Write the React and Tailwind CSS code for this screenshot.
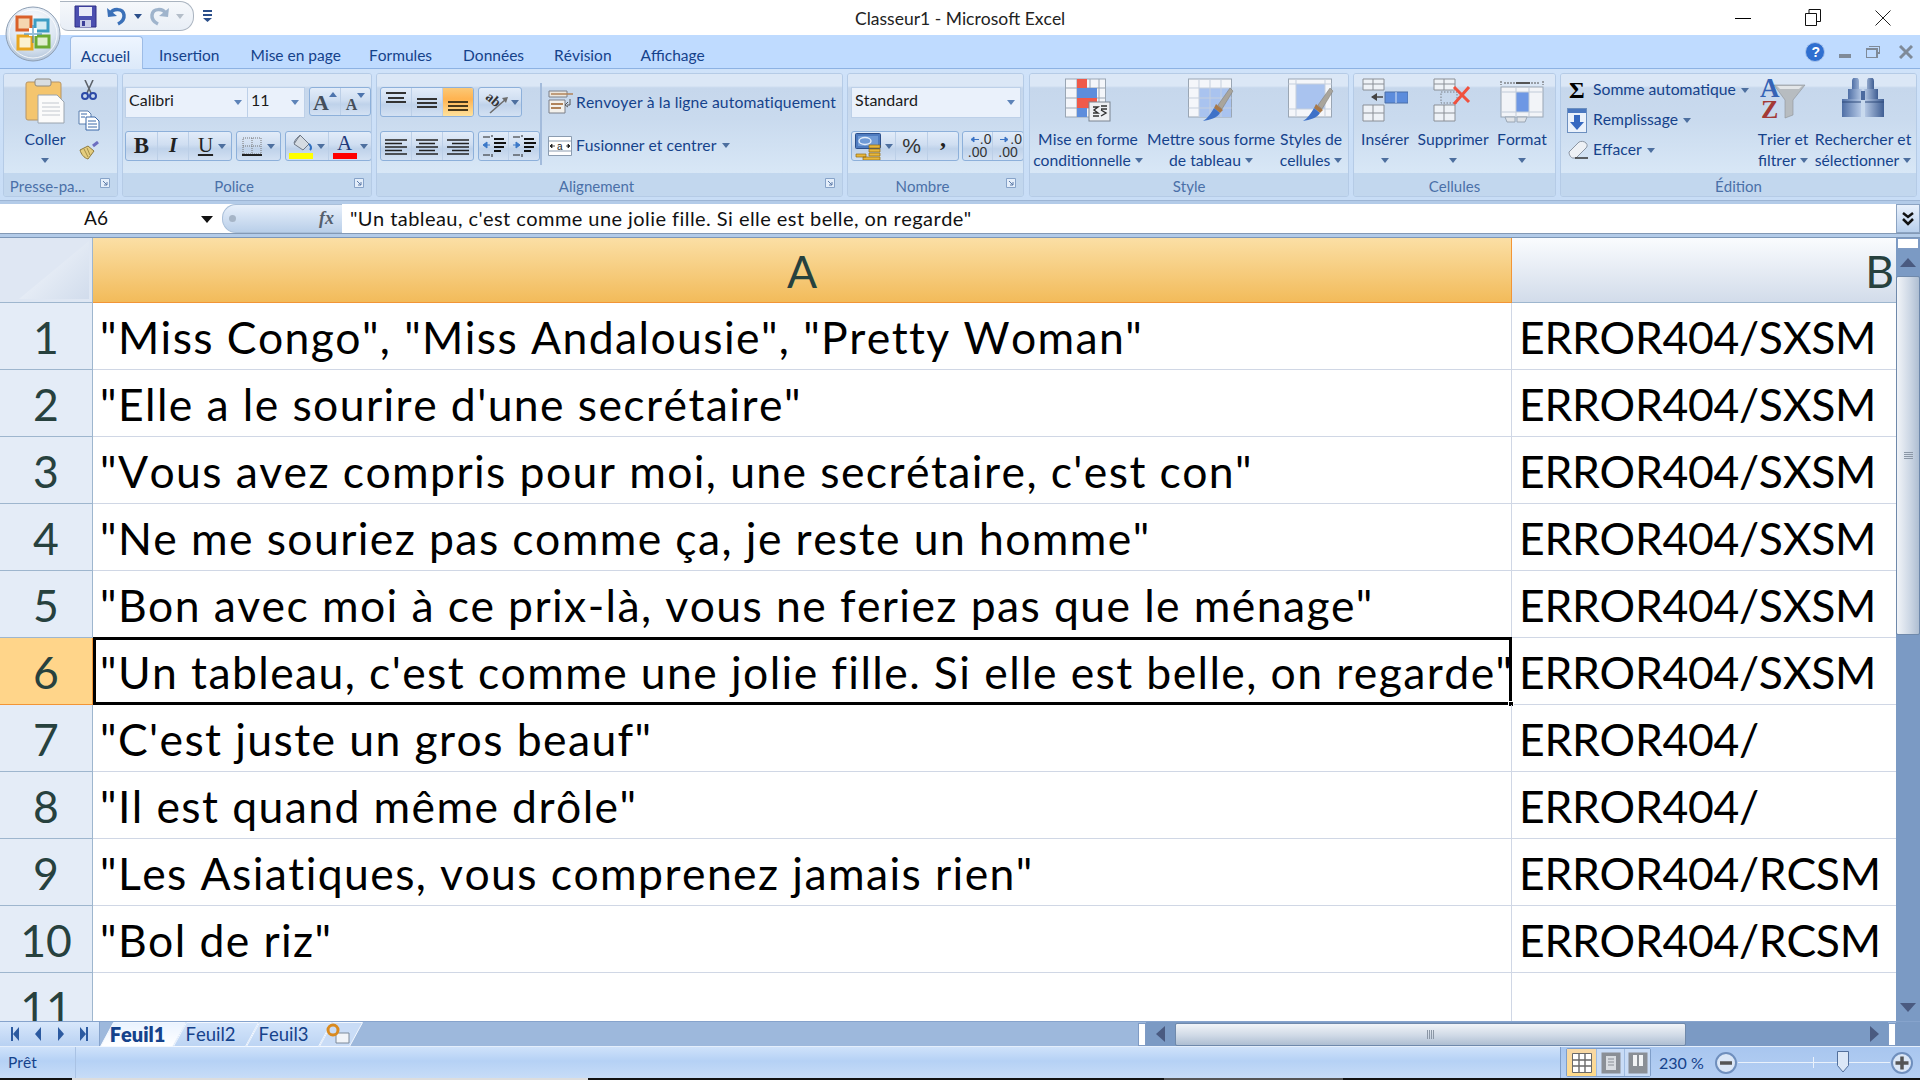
import React from 'react';

const SANS = 'font-["Lato","Noto_Sans",sans-serif] [font-kerning:none]';

const ROWS = [
  ['"Miss Congo", "Miss Andalousie", "Pretty Woman"', 'ERROR404/SXSM'],
  ['"Elle a le sourire d\'une secrétaire"', 'ERROR404/SXSM'],
  ['"Vous avez compris pour moi, une secrétaire, c\'est con"', 'ERROR404/SXSM'],
  ['"Ne me souriez pas comme ça, je reste un homme"', 'ERROR404/SXSM'],
  ['"Bon avec moi à ce prix-là, vous ne feriez pas que le ménage"', 'ERROR404/SXSM'],
  ['"Un tableau, c\'est comme une jolie fille. Si elle est belle, on regarde"', 'ERROR404/SXSM'],
  ['"C\'est juste un gros beauf"', 'ERROR404/'],
  ['"Il est quand même drôle"', 'ERROR404/'],
  ['"Les Asiatiques, vous comprenez jamais rien"', 'ERROR404/RCSM'],
  ['"Bol de riz"', 'ERROR404/RCSM'],
  ['', ''],
];

function Caret({ color = '#4d6f9f', size = 8, className = '' }) {
  return (
    <svg width={size} height={size / 2 + 1} viewBox="0 0 8 5" className={className}>
      <path d="M0 0h8L4 5z" fill={color} />
    </svg>
  );
}

function Launcher() {
  return (
    <svg width="12" height="12" viewBox="0 0 12 12" className="absolute right-[6px] top-[4px]">
      <path d="M1.5 1.5h9v9h-9z" fill="#e4eefa" stroke="#87a3c8" />
      <path d="M4 4l4 4M8 5v3H5" fill="none" stroke="#5c7ba8" />
    </svg>
  );
}

function Group({ width, caption, launcher, children, className = '' }) {
  return (
    <div className={`flex flex-col h-[124px] rounded-[3px] border border-[#b5cbe6] overflow-hidden ${className}`} style={{ width }}>
      <div className="flex-1 min-h-0 flex bg-[linear-gradient(180deg,#dbe7f6_0%,#dbe7f6_12%,#c6d7ec_14%,#c9daee_45%,#d8e7f6_100%)]">
        {children}
      </div>
      <div className={`relative h-[23px] shrink-0 pt-[3px] bg-[#c2d7ee] flex items-center justify-center text-[15px] text-[#4a70a8] ${launcher ? 'pr-[26px]' : ''}`}>
        {caption}
        {launcher && <Launcher />}
      </div>
    </div>
  );
}

function LargeButton({ width, icon, lines, caret, className = '' }) {
  return (
    <div className={`flex flex-col items-center shrink-0 ${className}`} style={{ width }}>
      <div className="h-[55px] pt-[4px] flex justify-center">{icon}</div>
      <div className="h-[21px] flex items-center whitespace-nowrap">{lines[0]}</div>
      <div className="h-[21px] flex items-center gap-[4px] whitespace-nowrap">
        {lines[1]}
        {caret && <Caret />}
      </div>
    </div>
  );
}

function BtnGroup({ children, className = '' }) {
  return (
    <div className={`flex rounded-[3px] border border-[#8db0da] bg-[linear-gradient(180deg,#e2ecf9_0%,#cfdef1_45%,#bfd2ea_60%,#d3e1f3_100%)] overflow-hidden ${className}`}>
      {children}
    </div>
  );
}

function Btn({ width, children, active, last }) {
  return (
    <div
      className={`flex items-center justify-center gap-[3px] h-full ${last ? '' : 'border-r border-[#bccfe7]'} ${active ? 'bg-[linear-gradient(180deg,#fbc876_0%,#ffb350_40%,#ffe29c_100%)]' : ''}`}
      style={{ width }}
    >
      {children}
    </div>
  );
}

function Combo({ width, text, textClass = '' }) {
  return (
    <div className={`h-[31px] flex items-center justify-between pl-[3px] pr-[5px] bg-[#eaf1fb] border border-[#bdd0e8] shrink-0 ${textClass}`} style={{ width }}>
      <span className="text-[16px] text-[#1a1a1a] -mt-[6px]">{text}</span>
      <Caret color="#5d83b8" />
    </div>
  );
}

function OfficeButton() {
  return (
    <svg width="56" height="56" viewBox="0 0 56 56" className="absolute left-[5px] top-[6px] z-10">
      <defs>
        <radialGradient id="orb" cx="50%" cy="30%" r="75%">
          <stop offset="0" stopColor="#fbfdff" />
          <stop offset="0.6" stopColor="#dce6f2" />
          <stop offset="1" stopColor="#a9bdd4" />
        </radialGradient>
      </defs>
      <circle cx="28" cy="28" r="27" fill="url(#orb)" stroke="#8e9fb4" />
      <circle cx="28" cy="28" r="24" fill="none" stroke="#ffffff" strokeOpacity="0.8" />
      <path d="M12 11h14v13H12z" fill="#f5d6b0" stroke="#d9602a" strokeWidth="3" />
      <path d="M30 14h13v11H30z" fill="#d5ecf3" stroke="#3d9dc4" strokeWidth="3" />
      <path d="M13 30h14v13H13z" fill="#fbf1cf" stroke="#e9a51d" strokeWidth="3" />
      <path d="M31 30h13v11H31z" fill="#e0eecf" stroke="#6bab33" strokeWidth="3" />
      <path d="M24 22h8v8h-8z" fill="#ffffff" />
      <path d="M28 19v18M19 28h18" stroke="#2e7fb5" strokeOpacity="0.5" strokeWidth="2" />
    </svg>
  );
}

function SaveIcon() {
  return (
    <svg width="23" height="23" viewBox="0 0 23 23">
      <path d="M1 1h21v21H1z" fill="#4b4fb0" stroke="#2f2f85" />
      <path d="M5 2h13v9H5z" fill="#e8eaf8" />
      <path d="M6 15h11v7H6z" fill="#c9cde8" />
      <path d="M8 16h3v5H8z" fill="#3c3f98" />
    </svg>
  );
}

function UndoIcon({ flip, muted }) {
  const c = muted ? '#9fb4cc' : '#3a70b8';
  return (
    <svg width="20" height="22" viewBox="0 0 20 22" style={flip ? { transform: 'scaleX(-1)' } : undefined}>
      <path d="M3 9c3-6 13-6 14 1 .5 4-2 7-6 9" fill="none" stroke={c} strokeWidth="3.5" />
      <path d="M0 3l1 9 9-1z" fill={c} />
    </svg>
  );
}

function PasteIcon() {
  return (
    <svg width="40" height="46" viewBox="0 0 40 46">
      <rect x="1" y="4" width="35" height="38" rx="2" fill="#f4c56e" stroke="#b59466" />
      <rect x="10" y="1" width="16" height="7" rx="2" fill="#d8dde2" stroke="#8e8a80" />
      <path d="M13 17h19l7 7v21H13z" fill="#fbfbfb" stroke="#9aa4ae" />
      <path d="M17 25h17M17 29h18M17 33h18M17 37h18" stroke="#c3c8cf" />
    </svg>
  );
}

function ScissorsIcon() {
  return (
    <svg width="16" height="21" viewBox="0 0 16 21">
      <path d="M4 0l6 13M12 0L6 13" stroke="#5d636b" strokeWidth="1.6" />
      <circle cx="4" cy="16" r="3" fill="none" stroke="#2c4aa8" strokeWidth="2" />
      <circle cx="12" cy="16" r="3" fill="none" stroke="#2c4aa8" strokeWidth="2" />
    </svg>
  );
}

function CopyIcon() {
  return (
    <svg width="22" height="21" viewBox="0 0 22 21">
      <path d="M1 1h9l3 3v10H1z" fill="#fff" stroke="#5b7fae" />
      <path d="M8 7h9l4 4v9H8z" fill="#fff" stroke="#3b68a8" />
      <path d="M3 4h6M3 7h4M10 11h8M10 14h9M10 17h9" stroke="#3b68a8" />
    </svg>
  );
}

function BrushIcon() {
  return (
    <svg width="20" height="19" viewBox="0 0 20 19">
      <path d="M14 5l5-4" stroke="#6d6ec0" strokeWidth="3" />
      <path d="M1 9l8-4 6 5-6 8C5 17 2 13 1 9z" fill="#e4cd7e" stroke="#8d7a3f" />
      <path d="M5 8l4 8M8 7l3 7" stroke="#a58f49" />
    </svg>
  );
}

function Grow({ small }) {
  return (
    <div className="flex items-start">
      <span className={`font-["Liberation_Serif",serif] font-bold text-[#444e5a] leading-none ${small ? 'text-[16px] mt-[7px]' : 'text-[22px] mt-[3px]'}`}>A</span>
      {small ? (
        <svg width="8" height="5" viewBox="0 0 8 5" className="mt-[3px]"><path d="M0 0h8L4 5z" fill="#4d74ad" /></svg>
      ) : (
        <svg width="8" height="5" viewBox="0 0 8 5" className="mt-[3px]"><path d="M0 5h8L4 0z" fill="#4d74ad" /></svg>
      )}
    </div>
  );
}

function BorderIcon() {
  return (
    <svg width="20" height="19" viewBox="0 0 20 19">
      <path d="M1 1h18v16H1zM10 1v16M1 9h18" fill="none" stroke="#777" strokeDasharray="1 1" />
      <path d="M0 18h20" stroke="#222" strokeWidth="2" />
    </svg>
  );
}

function FillIcon() {
  return (
    <svg width="25" height="26" viewBox="0 0 25 26">
      <path d="M11 2l9 9-6 6-9-6z" fill="#d5dbe2" stroke="#6f7885" />
      <path d="M11 3C8 4 6 7 5 10" fill="none" stroke="#6f7885" />
      <path d="M20 11c2 2 3 4 1 6" fill="none" stroke="#2f6fc0" strokeWidth="2" />
      <path d="M0 20h24v6H0z" fill="#ffff00" />
    </svg>
  );
}

function ColorA() {
  return (
    <div className="flex flex-col items-center w-[25px]">
      <span className='font-["Liberation_Serif",serif] text-[21px] leading-[20px] text-[#1f3a7a]'>A</span>
      <div className="w-[24px] h-[6px] bg-[#ff0000]" />
    </div>
  );
}

function Lines({ rows, color = '#222', w = 24, h = 18 }) {
  return (
    <svg width={w} height={h} viewBox={`0 0 ${w} ${h}`}>
      {rows.map((r, i) => (
        <path key={i} d={`M${r[0]} ${r[2]}H${r[1]}`} stroke={color} strokeWidth={r[3] || 1.4} />
      ))}
    </svg>
  );
}

function OrientIcon() {
  return (
    <svg width="28" height="28" viewBox="0 0 28 28">
      <text x="4" y="15" fontSize="14" fontWeight="700" fontFamily="Liberation Serif" fill="#333" transform="rotate(40 10 11)">ab</text>
      <path d="M8 25L24 11" stroke="#6d6d6d" strokeWidth="1.6" />
      <path d="M26 9l-6 1 4 5z" fill="#6d6d6d" />
    </svg>
  );
}

function IndentIcon({ right }) {
  return (
    <svg width="24" height="24" viewBox="0 0 24 24">
      <path d="M10 1v2M10 20v3M1 3h7M1 21h7" stroke="#222" />
      <path d="M12 5h10M12 9h13M12 13h10M12 17h7" stroke="#111" strokeWidth="2" />
      {right ? <path d="M1 11h5M4 8l4 3-4 3z" stroke="#3b78c8" fill="#3b78c8" /> : <path d="M3 11h5M5 8l-4 3 4 3z" stroke="#3b78c8" fill="#3b78c8" />}
    </svg>
  );
}

function WrapIcon() {
  return (
    <svg width="25" height="25" viewBox="0 0 25 25">
      <path d="M1 1h18v6H1z" fill="#ece7df" stroke="#7a7f88" />
      <path d="M3 4h22" stroke="#b0835a" strokeWidth="1.6" />
      <path d="M1 10h16v13H1z" fill="#f3f1ec" stroke="#7a7f88" />
      <path d="M3 14h12M3 18h10" stroke="#b0835a" strokeWidth="2" />
      <path d="M22 9v6h-3M20 12l-3 3 3 2" fill="none" stroke="#555" />
    </svg>
  );
}

function MergeIcon() {
  return (
    <svg width="24" height="20" viewBox="0 0 24 20">
      <path d="M.5.5h23v19H.5z" fill="#fff" stroke="#8b9cb0" />
      <path d="M.5 5h23M.5 15h23" stroke="#8b9cb0" />
      <text x="9" y="13.5" fontSize="10" fontFamily="Liberation Sans" fill="#222">a</text>
      <path d="M2 10h5M18 10h4M2 10l2-2v4zM22 10l-2-2v4z" stroke="#222" fill="#222" strokeWidth="0.8" />
    </svg>
  );
}

function CurrencyIcon() {
  return (
    <svg width="27" height="27" viewBox="0 0 27 27">
      <rect x="0.500" y="0.500" width="25" height="15" rx="1" fill="#4f7cc0" stroke="#2c4f8a" />
      <path d="M3 3h20v10H3z" fill="#6f9ad6" />
      <ellipse cx="10" cy="8" rx="6" ry="3.500" fill="none" stroke="#e2ecf9" strokeWidth="1.400" />
      <path d="M1 21h10v3H1zM14 12h11v3H14zM14 16h11v3H14zM14 20h11v3H14zM8 24h17v3H8z" fill="#e8b73c" stroke="#8f6c16" strokeWidth="0.700" />
    </svg>
  );
}

function DecimalIcon({ right }) {
  return (
    <div className='w-[28px] font-["Liberation_Sans",sans-serif] text-[#333] text-[14px] leading-[13px] text-center'>
      <div className="flex items-center justify-end gap-[1px]">
        <svg width="9" height="7" viewBox="0 0 9 7"><path d={right ? 'M0 3.5h5M5 1l3 2.5L5 6z' : 'M9 3.5H4M4 1L1 3.5 4 6z'} stroke="#3a73c4" fill="#3a73c4" /></svg>
        <span>.0</span>
      </div>
      <div>.00</div>
    </div>
  );
}

function CondIcon() {
  return (
    <svg width="46" height="44" viewBox="0 0 46 44">
      <rect x="0.5" y="1" width="40" height="38" fill="#f4f6fa" stroke="#9aa6b4" />
      <path d="M12 1v38M25 1v38M34 1v38M.5 10h40M.5 20h40M.5 30h40" stroke="#9aa6b4" />
      <path d="M12 1h10v9H12zM12 20h20v10H12z" fill="#ef5a4a" />
      <path d="M12 10h20v10H12zM12 30h10v9H12z" fill="#5d8ddc" />
      <rect x="24" y="24" width="21" height="19" fill="#eef0f3" stroke="#7a8490" />
      <path d="M28 29h5l-4 3 4 3h-5M28 38h6M36 28h6M36 31h6M36 38l5-3-5-3" fill="none" stroke="#333" strokeWidth="1.4" />
    </svg>
  );
}

function BrushOver() {
  return (
    <g>
      <path d="M30 27l12-17 3 3-11 18z" fill="#a9a59c" stroke="#7b7972" strokeWidth="0.5" />
      <path d="M28 26l7 6-3 3-6-5z" fill="#a8794a" />
      <path d="M26 30l6 5c-3 5-10 7-17 8 5-3 8-8 11-13z" fill="#3f72c8" />
    </g>
  );
}

function TableIcon() {
  return (
    <svg width="46" height="44" viewBox="0 0 46 44">
      <rect x="0.5" y="1" width="43" height="38" fill="#f4f6fa" stroke="#9aa6b4" />
      <rect x="11" y="10" width="32" height="29" fill="#a9c3ef" />
      <path d="M11 1v38M22 1v38M33 1v38M.5 10h43M.5 20h43M.5 30h43" stroke="#c5cfdd" />
      <BrushOver />
    </svg>
  );
}

function CellStyleIcon() {
  return (
    <svg width="46" height="44" viewBox="0 0 46 44">
      <rect x="0.5" y="1" width="43" height="38" fill="#f4f6fa" stroke="#9aa6b4" />
      <rect x="8" y="6" width="29" height="25" fill="#a9c3ef" />
      <path d="M8 1v38M37 1v38M.5 6h43M.5 31h43" stroke="#c5cfdd" />
      <BrushOver />
    </svg>
  );
}

function InsertIcon() {
  return (
    <svg width="46" height="44" viewBox="0 0 46 44">
      <path d="M1 1h21v11H1zM1 27h21v16H1z" fill="#eef2f7" stroke="#8a8f96" />
      <path d="M1 6h21M11 1v11M1 35h21M11 27v16" stroke="#8a8f96" />
      <path d="M23 14h23v11H23z" fill="#5c8cdc" stroke="#4a6fa8" />
      <path d="M34 14v11" stroke="#dbe6f7" />
      <path d="M10 19h11" stroke="#444" strokeWidth="1.6" />
      <path d="M15 15l-6 4 6 4z" fill="#444" />
    </svg>
  );
}

function DeleteIcon() {
  return (
    <svg width="40" height="44" viewBox="0 0 40 44">
      <path d="M1 1h21v11H1zM1 27h21v16H1z" fill="#eef2f7" stroke="#8a8f96" />
      <path d="M1 6h21M11 1v11M1 35h21M11 27v16" stroke="#8a8f96" />
      <path d="M8 14h16v11H8z" fill="none" stroke="#7a7f86" strokeDasharray="1.5 1.5" />
      <path d="M21 9l15 15M36 9L21 26" stroke="#f0513e" strokeWidth="3" />
    </svg>
  );
}

function FormatIcon() {
  return (
    <svg width="44" height="46" viewBox="0 0 44 46">
      <path d="M1 3v4M43 3v4M4 5h36" stroke="#555" strokeDasharray="2 1" />
      <path d="M16 5h14" stroke="#555" strokeWidth="2" />
      <rect x="1" y="9" width="42" height="30" fill="#f2f4f8" stroke="#9aa6b4" />
      <rect x="16" y="14" width="13" height="20" fill="#6d97e4" />
      <path d="M1 14h42M1 34h42M16 9v30M29 9v30" stroke="#c0cad8" />
      <path d="M5 39h10v5H7zM17 39h10l-2 5H17z" fill="#dfe3e8" stroke="#9aa6b4" />
    </svg>
  );
}

function FillDownIcon() {
  return (
    <svg width="20" height="25" viewBox="0 0 20 25">
      <rect x="0.5" y="0.5" width="19" height="24" fill="#eaf1fb" stroke="#6c8fbf" />
      <rect x="1" y="1" width="18" height="4" fill="#4a77bf" />
      <path d="M7 7h6v7h4l-7 8-7-8h4z" fill="#3568c0" />
    </svg>
  );
}

function EraserIcon() {
  return (
    <svg width="22" height="20" viewBox="0 0 22 20">
      <path d="M2 12L12 2c2-1 5-1 7 1s1 4 0 5L9 18H6c-2 0-4-3-4-6z" fill="#eef1f5" stroke="#8b95a3" />
      <path d="M8 18h13" stroke="#333" strokeWidth="1.4" />
    </svg>
  );
}

function SortIcon() {
  return (
    <svg width="46" height="42" viewBox="0 0 46 42">
      <path d="M14 7h31l-12 15v15l-8 3V22z" fill="#b7bcc0" stroke="#8d9297" strokeWidth="0.6" />
      <path d="M17 8h25l-3 3H20z" fill="#e3e6e8" />
      <text x="0" y="19" fontSize="27" fontWeight="700" fontFamily="Liberation Serif" fill="#3563b5">A</text>
      <text x="1" y="40" fontSize="26" fontWeight="700" fontFamily="Liberation Serif" fill="#a33a36">Z</text>
    </svg>
  );
}

function BinocularsIcon() {
  return (
    <svg width="44" height="40" viewBox="0 0 44 40">
      <defs>
        <linearGradient id="bin" x1="0" x2="1">
          <stop offset="0" stopColor="#4f6fa6" />
          <stop offset="0.5" stopColor="#c0d2ec" />
          <stop offset="1" stopColor="#3f5e93" />
        </linearGradient>
      </defs>
      <path d="M11 3a3 3 0 0 1 7 0v8h-7zM26 3a3 3 0 0 1 7 0v8h-7z" fill="url(#bin)" />
      <path d="M7 11h14v10H7zM23 11h14v10H23z" fill="url(#bin)" />
      <path d="M1 21h19v18H1zM24 21h19v18H24z" fill="url(#bin)" />
      <path d="M20 13h4v9h-4z" fill="#4b6a9f" />
      <path d="M1 24h19M24 24h19" stroke="#2f4a7a" />
    </svg>
  );
}

function SlideTab({ label, active, width = 86 }) {
  const right = width;
  return (
    <div className="relative h-[25px] flex items-center justify-center -mr-[13px]" style={{ width }}>
      <svg width={width} height="25" viewBox={`0 0 ${width} 25`} className="absolute inset-0">
        <defs>
          <linearGradient id={active ? 'tabOn' : 'tabOff'} x1="0" x2="0" y1="0" y2="1">
            <stop offset="0" stopColor={active ? '#eaf3ff' : '#d4e5fb'} />
            <stop offset="1" stopColor={active ? '#ffffff' : '#bcd4f3'} />
          </linearGradient>
        </defs>
        <path d={`M0.5 24.5L13.5 0.5H${right - 0.5}L${right - 13.5} 24.5z`} fill={`url(#${active ? 'tabOn' : 'tabOff'})`} stroke="#f3f8ff" />
      </svg>
      <span className={`relative pr-[11px] leading-none text-[#15428b] ${active ? 'font-extrabold text-[20px]' : 'text-[18.5px]'}`}>{label}</span>
    </div>
  );
}

function NavArrow({ d }) {
  return (
    <svg width="10" height="14" viewBox="0 0 10 14">
      <path d={d} fill="#2c5aa0" />
    </svg>
  );
}

function Splitter() {
  return <div className="w-[8px] h-[23px] bg-white border border-[#7f9bc4] shrink-0" />;
}

export default function App() {
  return (
    <div className={`relative w-[1920px] h-[1080px] overflow-hidden bg-white ${SANS}`}>
      <OfficeButton />

      {/* title bar */}
      <div className="relative h-[35px] bg-white flex items-center">
        <div className="ml-[60px] w-[134px] h-[30px] mt-[-3px] flex items-center pl-[14px] border border-l-0 border-[#aab4c0] rounded-r-[14px] rounded-bl-[8px] bg-[linear-gradient(180deg,#f6f8fb,#e8eef6)]">
          <SaveIcon />
          <div className="ml-[10px]"><UndoIcon /></div>
          <Caret color="#2b4f8a" className="ml-[7px]" />
          <div className="ml-[7px]"><UndoIcon flip muted /></div>
          <Caret color="#b4bec9" className="ml-[7px]" />
        </div>
        <svg width="12" height="13" viewBox="0 0 12 13" className="ml-[8px] mt-[-3px]">
          <path d="M1 1h9M1 5h9" stroke="#2b4f8a" strokeWidth="2" />
          <path d="M1 8h9L5.500 12z" fill="#2b4f8a" />
        </svg>
        <div className="absolute left-[855px] top-[8px] text-[17.5px] leading-[22px] text-[#222]">Classeur1 - Microsoft Excel</div>
        <div className="ml-auto flex items-center pr-[29px] gap-[54px]">
          <div className="w-[16px] h-[1px] bg-black mt-[1px]" />
          <svg width="16" height="17" viewBox="0 0 16 17">
            <path d="M.5 4.500h11v12H.5z" fill="none" stroke="#111" />
            <path d="M4 4V.5h11.500v12H12" fill="none" stroke="#111" />
          </svg>
          <svg width="16" height="16" viewBox="0 0 16 16">
            <path d="M.5.5l15 15M15.500.5l-15 15" stroke="#222" />
          </svg>
        </div>
      </div>

      {/* tab strip */}
      <div className="h-[34px] bg-[#bfdbff] flex items-end border-b border-[#8db2e3]">
        <div className="ml-[70px] w-[73px] h-[33px] -mb-[1px] pt-[8px] pr-[2px] rounded-t-[4px] border border-b-0 border-[#9dbce6] bg-[linear-gradient(180deg,#eef5ff,#dce9f9)] flex items-center justify-center text-[15.5px] text-[#15428b]">Accueil</div>
        <div className="h-[33px] pt-[9px] flex items-center text-[15.5px] text-[#15428b]">
          <span className="ml-[16px]">Insertion</span>
          <span className="ml-[31px]">Mise en page</span>
          <span className="ml-[28px]">Formules</span>
          <span className="ml-[31px]">Données</span>
          <span className="ml-[30px]">Révision</span>
          <span className="ml-[29px]">Affichage</span>
        </div>
        <div className="ml-auto h-[33px] flex items-center pr-[7px] text-[#7f8a98]">
          <svg width="20" height="20" viewBox="0 0 20 20">
            <circle cx="10" cy="10" r="9.500" fill="#2f6fd0" stroke="#a9c4ec" />
            <text x="6.500" y="15" fontSize="14" fontWeight="700" fontFamily="Liberation Sans" fill="#fff">?</text>
          </svg>
          <div className="ml-[14px] w-[12px] h-[4px] bg-[#7f8a98] mt-[8px]" />
          <svg width="14" height="12" viewBox="0 0 14 12" className="ml-[15px]">
            <path d="M3 0h11v7h-2M0 3h11v9H0z" fill="none" stroke="#7f8a98" strokeWidth="2" />
          </svg>
          <svg width="14" height="14" viewBox="0 0 14 14" className="ml-[19px]">
            <path d="M1 1l12 12M13 1L1 13" stroke="#7f8a98" strokeWidth="3" />
          </svg>
        </div>
      </div>

      {/* ribbon */}
      <div className="h-[131px] bg-[linear-gradient(180deg,#cfe2f9,#c8ddf6)] pt-[4px] pl-[3px] flex gap-[4px] text-[15.7px] text-[#15428b]">
        <Group width={115} caption="Presse-pa..." launcher>
          <LargeButton
            width={56}
            className="ml-[13px]"
            icon={<PasteIcon />}
            lines={[<span>Coller</span>, <Caret />]}
          />
          <div className="ml-[3px] w-[26px] flex flex-col items-center pt-[6px]">
            <ScissorsIcon />
            <div className="mt-[9px]"><CopyIcon /></div>
            <div className="mt-[10px]"><BrushIcon /></div>
          </div>
        </Group>

        <Group width={250} caption="Police" launcher>
          <div className="pl-[2px] pt-[13px] flex flex-col">
            <div className="flex items-start">
              <Combo width={123} text="Calibri" />
              <Combo width={57} text="11" textClass="border-l-0" />
              <BtnGroup className="ml-[4px] h-[29px]">
                <Btn width={31}><Grow /></Btn>
                <Btn width={29} last><Grow small /></Btn>
              </BtnGroup>
            </div>
            <div className="flex mt-[13px] h-[30px]">
              <BtnGroup>
                <Btn width={32}><span className='font-["Liberation_Serif",serif] font-bold text-[23px] text-[#222]'>B</span></Btn>
                <Btn width={31}><span className='font-["Liberation_Serif",serif] italic font-bold text-[21px] text-[#222]'>I</span></Btn>
                <Btn width={42} last>
                  <span className='font-["Liberation_Serif",serif] underline text-[21px] text-[#222] ml-[4px]'>U</span>
                  <Caret className="ml-[2px]" />
                </Btn>
              </BtnGroup>
              <BtnGroup className="ml-[4px]">
                <Btn width={43} last>
                  <BorderIcon />
                  <Caret className="ml-[2px]" />
                </Btn>
              </BtnGroup>
              <BtnGroup className="ml-[4px]">
                <Btn width={43}>
                  <FillIcon />
                  <Caret />
                </Btn>
                <Btn width={42} last>
                  <ColorA />
                  <Caret />
                </Btn>
              </BtnGroup>
            </div>
          </div>
        </Group>

        <Group width={467} caption="Alignement" launcher>
          <div className="pl-[3px] pt-[13px] flex flex-col w-[163px] shrink-0">
            <div className="flex h-[30px]">
              <BtnGroup>
                <Btn width={31}><Lines w={24} h={22} rows={[[2, 22, 2, 2], [4, 20, 7, 2], [2, 22, 11, 2]]} color="#333" /></Btn>
                <Btn width={31}><Lines w={24} h={22} rows={[[2, 22, 8, 2], [2, 22, 12, 2], [2, 22, 16, 2]]} color="#333" /></Btn>
                <Btn width={30} active last><Lines w={24} h={22} rows={[[2, 22, 11, 2], [2, 22, 15, 2], [2, 22, 19, 2]]} color="#4a3a1c" /></Btn>
              </BtnGroup>
              <BtnGroup className="ml-[4px]">
                <Btn width={42} last>
                  <OrientIcon />
                  <Caret className="-ml-[2px]" />
                </Btn>
              </BtnGroup>
            </div>
            <div className="flex mt-[14px] h-[30px]">
              <BtnGroup>
                <Btn width={31}><Lines rows={[[1, 23, 3], [1, 18, 6.5], [1, 23, 10], [1, 18, 13.5], [1, 23, 17]]} /></Btn>
                <Btn width={31}><Lines rows={[[1, 23, 3], [4, 20, 6.5], [1, 23, 10], [4, 20, 13.5], [1, 23, 17]]} /></Btn>
                <Btn width={30} last><Lines rows={[[1, 23, 3], [6, 23, 6.5], [1, 23, 10], [6, 23, 13.5], [1, 23, 17]]} /></Btn>
              </BtnGroup>
              <BtnGroup className="ml-[4px]">
                <Btn width={30}><IndentIcon /></Btn>
                <Btn width={30} last><IndentIcon right /></Btn>
              </BtnGroup>
            </div>
          </div>
          <div className="w-[2px] h-[82px] mt-[9px] bg-[#a3bbdb] shrink-0" />
          <div className="ml-[6px] flex flex-col">
            <div className="flex items-center h-[25px] mt-[16px]">
              <WrapIcon />
              <span className="ml-[3px] whitespace-nowrap tracking-[0.1px]">Renvoyer à la ligne automatiquement</span>
            </div>
            <div className="flex items-center h-[25px] mt-[18px]">
              <MergeIcon />
              <span className="ml-[4px] whitespace-nowrap">Fusionner et centrer</span>
              <Caret className="ml-[6px]" />
            </div>
          </div>
        </Group>

        <Group width={177} caption="Nombre" launcher>
          <div className="pl-[3px] pt-[13px] flex flex-col">
            <Combo width={170} text="Standard" />
            <div className="flex mt-[13px] h-[30px]">
              <BtnGroup>
                <Btn width={44}>
                  <CurrencyIcon />
                  <Caret />
                </Btn>
                <Btn width={32}><span className='font-["Liberation_Sans",sans-serif] text-[21px] text-[#333]'>%</span></Btn>
                <Btn width={30} last><span className='font-["Liberation_Serif",serif] font-bold text-[24px] leading-[24px] text-[#222] -translate-y-[8px]'>,</span></Btn>
              </BtnGroup>
              <BtnGroup className="ml-[3px]">
                <Btn width={30}><DecimalIcon /></Btn>
                <Btn width={30} last><DecimalIcon right /></Btn>
              </BtnGroup>
            </div>
          </div>
        </Group>

        <Group width={320} caption="Style" className="ml-[1px]">
          <LargeButton width={110} className="ml-[3px]" icon={<CondIcon />} lines={['Mise en forme', 'conditionnelle']} caret />
          <LargeButton width={126} className="ml-[5px]" icon={<TableIcon />} lines={['Mettre sous forme', 'de tableau']} caret />
          <LargeButton width={70} className="ml-[2px]" icon={<CellStyleIcon />} lines={['Styles de', 'cellules']} caret />
        </Group>

        <Group width={203} caption="Cellules">
          <LargeButton width={58} className="ml-[2px]" icon={<InsertIcon />} lines={['Insérer', <Caret />]} />
          <LargeButton width={76} className="ml-[1px]" icon={<DeleteIcon />} lines={['Supprimer', <Caret />]} />
          <LargeButton width={60} className="ml-[1px]" icon={<FormatIcon />} lines={['Format', <Caret />]} />
        </Group>

        <Group width={357} caption="Édition">
          <div className="ml-[6px] w-[188px] shrink-0 flex flex-col pt-[1px]">
            <div className="h-[30px] flex items-center">
              <span className='w-[26px] pl-[2px] font-["Liberation_Serif",serif] font-bold text-[24px] leading-none text-black'>Σ</span>
              <span className="whitespace-nowrap">Somme automatique</span>
              <Caret className="ml-[5px]" />
            </div>
            <div className="h-[30px] flex items-center">
              <div className="w-[26px]"><FillDownIcon /></div>
              <span>Remplissage</span>
              <Caret className="ml-[5px]" />
            </div>
            <div className="h-[30px] flex items-center">
              <div className="w-[26px]"><EraserIcon /></div>
              <span>Effacer</span>
              <Caret className="ml-[5px]" />
            </div>
          </div>
          <LargeButton width={56} icon={<SortIcon />} lines={['Trier et', 'filtrer']} caret />
          <LargeButton width={90} className="ml-[7px]" icon={<BinocularsIcon />} lines={['Rechercher et', 'sélectionner']} caret />
        </Group>
      </div>

      {/* formula bar */}
      <div className="h-[37px] pt-[3px] bg-[#b3cbe8] border-t border-[#9db5d4]">
        <div className="h-[30px] flex bg-white border-b border-[#8399b5]">
          <div className="w-[222px] relative flex items-center justify-center pr-[30px] text-[19px] text-[#111]">
            A6
            <svg width="12" height="7" viewBox="0 0 12 7" className="absolute right-[9px] top-[12px]"><path d="M0 0h12L6 7z" fill="#111" /></svg>
          </div>
          <div className="w-[120px] flex items-center justify-between pl-[6px] pr-[8px] rounded-l-[14px] border border-r-0 border-[#a9bfd9] bg-[linear-gradient(180deg,#e8f0fb,#b9cfe9)]">
            <div className="w-[7px] h-[7px] rounded-full bg-[#a6b5c7]" />
            <span className='font-["Liberation_Serif",serif] italic font-bold text-[18px] text-[#55606e]'>fx</span>
          </div>
          <div className="flex-1 pl-[8px] pb-[2px] flex items-center text-[20px] tracking-[0.44px] text-[#111] whitespace-nowrap">
            "Un tableau, c'est comme une jolie fille. Si elle est belle, on regarde"
          </div>
          <div className="w-[24px] flex items-center justify-center border border-[#8ba3c2] bg-[linear-gradient(180deg,#e9f1fc,#b9d0ec)]">
            <svg width="14" height="16" viewBox="0 0 14 16">
              <path d="M2 2l5 4 5-4M2 8l5 5 5-5" fill="none" stroke="#111" strokeWidth="2.500" />
            </svg>
          </div>
        </div>
      </div>

      {/* sheet */}
      <div className="h-[784px] flex border-t border-[#7d97b8] bg-white">
        <div className="w-[1896px] overflow-hidden text-[44.5px] leading-none">
          <div className="h-[65px] flex">
            <div className="w-[93px] shrink-0 bg-[#dfe7f3] border-r border-b border-[#9eb6ce] flex items-end justify-end p-[3px]">
              <div className="w-[70px] h-[58px] bg-[linear-gradient(135deg,#f6f9fd,#d1dcec)] [clip-path:polygon(100%_0,100%_100%,0_100%)]" />
            </div>
            <div className="w-[1419px] shrink-0 pt-[2px] bg-[linear-gradient(180deg,#fbdfa5,#f2bb5a)] border-r border-b border-[#f29536] flex items-center justify-center text-[#27413e]">A</div>
            <div className="flex-1 pt-[2px] bg-[linear-gradient(180deg,#fafcfe,#d2dcea)] border-b border-[#9eb6ce] flex items-center justify-end pr-[2px] text-[#27413e]">B</div>
          </div>
          {ROWS.map((row, i) => {
            const selected = i === 5;
            return (
              <div key={i} className="h-[67px] flex">
                <div className={`w-[93px] shrink-0 pt-[2px] flex items-center justify-center border-r border-b text-[#27413e] ${selected ? 'bg-[#ffd58a] border-[#f29536]' : 'bg-[#e4ecf7] border-[#9eb6ce]'}`}>
                  {i + 1}
                </div>
                <div className={`relative w-[1419px] shrink-0 pt-[2px] flex items-center pl-[7px] tracking-[1.4px] whitespace-nowrap text-black ${selected ? '' : 'border-r border-b border-[#d0d7e5]'}`}>
                  {row[0]}
                  {selected && (
                    <div className="absolute left-0 -top-[1px] w-[1419px] h-[68px] border-[3px] border-black pointer-events-none">
                      <div className="absolute -right-[5px] -bottom-[5px] w-[6px] h-[6px] bg-black border border-white" />
                    </div>
                  )}
                </div>
                <div className="flex-1 pt-[2px] flex items-center pl-[7px] tracking-[-0.3px] whitespace-nowrap border-b border-[#d0d7e5] text-black overflow-hidden">{row[1]}</div>
              </div>
            );
          })}
        </div>

        {/* vertical scrollbar */}
        <div className="w-[24px] flex flex-col bg-[#7b9ac4]">
          <div className="h-[11px] mx-[1px] bg-white border border-[#7f9bc4] shrink-0" />
          <div className="h-[27px] flex items-center justify-center shrink-0">
            <svg width="16" height="9" viewBox="0 0 16 9"><path d="M0 9h16L8 0z" fill="#4a5a80" /></svg>
          </div>
          <div className="h-[359px] rounded-[2px] border border-[#6f89ab] bg-[linear-gradient(90deg,#f1f4f8,#cfd9e6_55%,#aebed2)] flex items-center justify-center shrink-0">
            <div className="w-[9px] h-[7px] bg-[repeating-linear-gradient(180deg,#8b97a6_0,#8b97a6_1px,transparent_1px,transparent_2px)]" />
          </div>
          <div className="flex-1" />
          <div className="h-[27px] flex items-center justify-center shrink-0">
            <svg width="16" height="9" viewBox="0 0 16 9"><path d="M0 0h16L8 9z" fill="#4a5a80" /></svg>
          </div>
        </div>
      </div>

      {/* sheet tabs and horizontal scrollbar */}
      <div className="h-[25px] flex items-center bg-[#9db8dc] border-t border-[#86a3cc]">
        <div className="w-[100px] h-full shrink-0 flex items-center justify-around px-[4px] bg-[linear-gradient(180deg,#d8e7fb,#b8d1f2)] border-r border-[#86a3cc]">
          <NavArrow d="M1 0h2v14H1zM9 0v14L3 7z" />
          <NavArrow d="M8 0v14L2 7z" />
          <NavArrow d="M2 0v14l6-7z" />
          <NavArrow d="M7 0h2v14H7zM1 0v14l6-7z" />
        </div>
        <SlideTab label="Feuil1" active />
        <SlideTab label="Feuil2" />
        <SlideTab label="Feuil3" />
        <div className="relative w-[44px] h-[25px] flex items-center justify-center">
          <svg width="44" height="25" viewBox="0 0 44 25" className="absolute inset-0">
            <path d="M.5 24.500L13.500.5H43.500L30.500 24.500z" fill="#c9dcf6" stroke="#f3f8ff" />
            <path d="M17 11h13v10H17z" fill="#f1f4f8" stroke="#7d8a9b" />
            <circle cx="14" cy="8" r="5" fill="none" stroke="#d98a1f" strokeWidth="3" />
          </svg>
        </div>
        <div className="ml-auto flex items-center h-full">
          <Splitter />
          <div className="w-[742px] h-full flex items-center bg-[#7b9ac4]">
            <div className="w-[29px] flex justify-center">
              <svg width="9" height="16" viewBox="0 0 9 16"><path d="M9 0v16L0 8z" fill="#4a5a80" /></svg>
            </div>
            <div className="w-[511px] h-[23px] rounded-[2px] border border-[#6f89ab] bg-[linear-gradient(180deg,#f1f4f8,#cfd9e6_55%,#aebed2)] flex items-center justify-center">
              <div className="w-[7px] h-[9px] bg-[repeating-linear-gradient(90deg,#8b97a6_0,#8b97a6_1px,transparent_1px,transparent_2px)]" />
            </div>
            <div className="flex-1" />
            <div className="w-[27px] flex justify-center">
              <svg width="9" height="16" viewBox="0 0 9 16"><path d="M0 0v16L9 8z" fill="#4a5a80" /></svg>
            </div>
          </div>
          <Splitter />
          <div className="w-[24px] h-full bg-[#7b9ac4]" />
        </div>
      </div>

      {/* status bar */}
      <div className="h-[32px] flex items-center border-t border-[#e4eefb] bg-[linear-gradient(180deg,#cfe2fa_0%,#b5d1f5_45%,#c7dcf7_100%)] text-[#15428b] text-[15.5px]">
        <div className="w-[76px] h-full pl-[8px] flex items-center border-r border-[#a9c2e4]">Prêt</div>
        <div className="ml-auto w-[360px] h-full flex items-center border-l border-[#7f9ec9] pl-[5px] bg-[linear-gradient(180deg,#a8c6ef,#b5cff3)]">
          <div className="w-[85px] h-[29px] flex rounded-[2px] border border-[#7f9ec9]">
            <div className="w-[29px] flex items-center justify-center bg-[linear-gradient(180deg,#f7d8a6,#ffdb8a)]">
              <svg width="20" height="20" viewBox="0 0 20 20">
                <path d="M.5.5h19v19H.5z" fill="#fff" stroke="#6a6a6a" />
                <path d="M.5 7h19M.5 13h19M7 .5v19M13 .5v19" stroke="#6a6a6a" strokeWidth="1.400" />
              </svg>
            </div>
            <div className="w-[28px] flex items-center justify-center border-l border-[#9fbbe0] bg-[#c9dcf6]">
              <svg width="20" height="22" viewBox="0 0 20 22">
                <path d="M.5.5h19v21H.5z" fill="#8a8f96" />
                <path d="M5 4h10v14H5z" fill="#d9dde2" />
                <path d="M7 7h6M7 10h6M7 13h6" stroke="#8a8f96" />
              </svg>
            </div>
            <div className="flex-1 flex items-center justify-center border-l border-[#9fbbe0] bg-[#c9dcf6]">
              <svg width="20" height="22" viewBox="0 0 20 22">
                <path d="M.5.5h19v21H.5z" fill="#8a8f96" />
                <path d="M5 3h4v11H5zM11 3h4v11h-4z" fill="#f1f3f5" />
              </svg>
            </div>
          </div>
          <span className="ml-[8px] w-[55px] text-[16px] whitespace-nowrap">230 %</span>
          <svg width="24" height="24" viewBox="0 0 24 24">
            <circle cx="12" cy="12" r="10" fill="#dbe7f7" stroke="#6f8fbd" strokeWidth="2" />
            <path d="M6 12h12" stroke="#555" strokeWidth="3.500" />
          </svg>
          <div className="relative flex-1 h-[1px] bg-[#e9f1fb]">
            <div className="absolute left-[75px] -top-[5px] w-[1px] h-[11px] bg-[#e9f1fb]" />
            <svg width="12" height="22" viewBox="0 0 12 22" className="absolute left-[99px] -top-[11px]">
              <path d="M.5.5h11v14L6 21 .5 14.500z" fill="#dbe7f7" stroke="#53709c" />
            </svg>
          </div>
          <svg width="24" height="24" viewBox="0 0 24 24" className="mr-[6px]">
            <circle cx="12" cy="12" r="10" fill="#dbe7f7" stroke="#6f8fbd" strokeWidth="2" />
            <path d="M5.500 12h13M12 5.500v13" stroke="#555" strokeWidth="3.500" />
          </svg>
        </div>
      </div>

      {/* dark strip along the bottom */}
      <div className="h-[2px] flex bg-[#111]">
        <div className="ml-[72px] w-[516px] bg-[#ddd]" />
        <div className="ml-[576px] w-[179px] bg-[#555]" />
      </div>
    </div>
  );
}
